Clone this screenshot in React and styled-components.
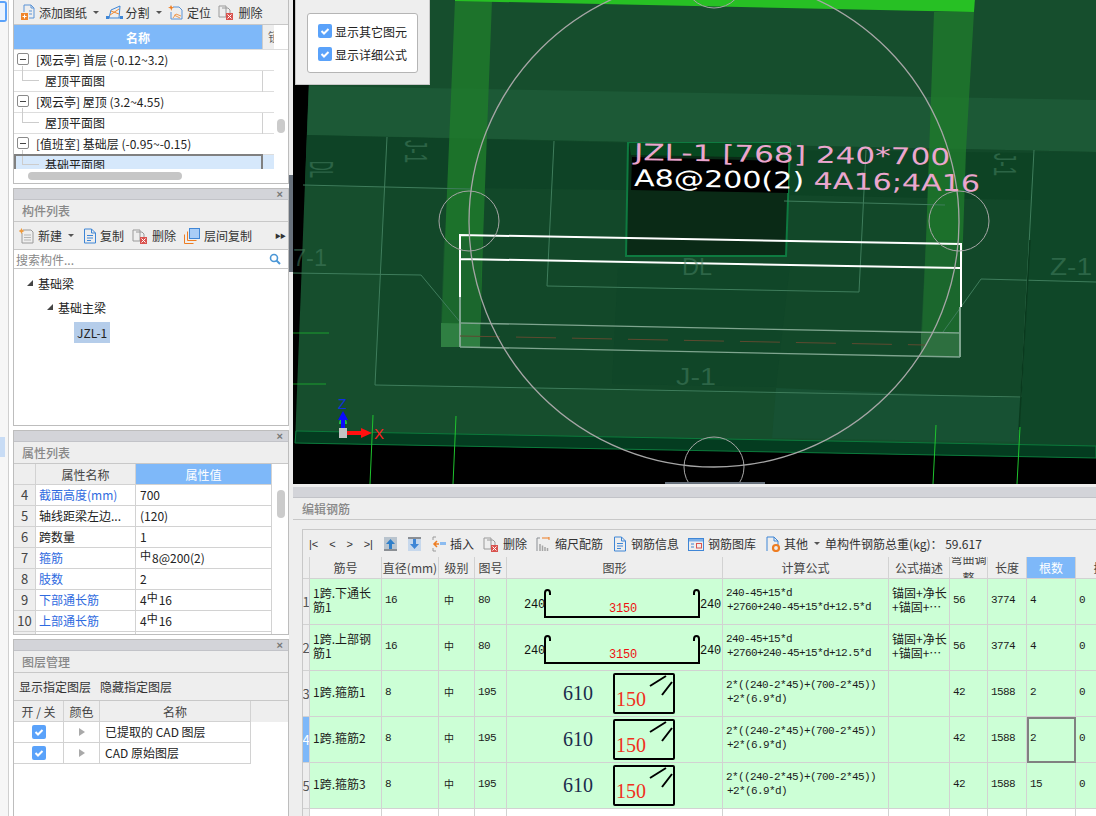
import React from 'react';
import styled, { createGlobalStyle } from 'styled-components';

const BLUE = '#7eb8f9';
const LINE = '#d2d2d2';
const PANEL = '#eeeeee';
const UI_FONT = '"Noto Sans CJK SC", "Noto Sans", sans-serif';
const MONO_FONT = '"Liberation Mono", "Noto Sans CJK SC", monospace';

const GlobalStyle = createGlobalStyle`
  html, body {
    margin: 0;
    width: 1096px;
    height: 816px;
    overflow: hidden;
    background: ${PANEL};
    font-family: ${UI_FONT};
    font-size: 12px;
    color: #222;
  }
  *, *::before, *::after { box-sizing: border-box; }
`;

/* ---------- icons ---------- */

const Svg = ({ children, w = 16, h = 16 }) => (
  <svg width={w} height={h} viewBox={`0 0 ${w} ${h}`} fill="none" style={{ flex: 'none' }}>
    {children}
  </svg>
);

const AddSheetIcon = () => (
  <Svg>
    <path d="M4 1h7l3 3v10H9M4 1v7" stroke="#5b93d6" />
    <path d="M11 1v3h3M9 7h3M9 10h3" stroke="#5b93d6" />
    <rect x="1" y="9" width="7" height="7" fill="#f0852a" />
    <path d="M4.500 10.500v4M2.500 12.500h4" stroke="#fff" />
  </Svg>
);
const SplitIcon = () => (
  <Svg w={17}>
    <path d="M1 14h15M3 14l2-8 9-4-1 12" stroke="#3f86d6" />
    <path d="M4 11l9-6M5 7l8 3" stroke="#ee8a34" />
    <rect x="0" y="12" width="3" height="3" fill="#3f86d6" />
    <rect x="14" y="12" width="3" height="3" fill="#3f86d6" />
  </Svg>
);
const LocateIcon = () => (
  <Svg>
    <path d="M5 3h6l3 3v9H3V8" stroke="#5b93d6" />
    <path d="M3 1l1 2 2 .5-2 1L3.500 7 2.500 4.500 0 3.500 2 3z" fill="#ee7d22" />
    <path d="M5 14l3-4 5 2M6 11l6 3" stroke="#ee9a52" />
  </Svg>
);
const DeleteIcon = () => (
  <Svg>
    <path d="M1 2h7v11H1z" stroke="#9a9a9a" />
    <path d="M4 4h6l2 2v4" stroke="#9a9a9a" />
    <rect x="8" y="9" width="7" height="7" fill="#d9534f" />
    <path d="M9.500 10.500l4 4M13.500 10.500l-4 4" stroke="#fff" />
  </Svg>
);
const NewIcon = () => (
  <Svg>
    <path d="M4 2h8l2 2v11H3V5" stroke="#9a9a9a" />
    <path d="M5 7h7M5 9.500h7M5 12h7" stroke="#b5b5b5" />
    <path d="M2.500 0l1 2 2 1-2 1-1 2-1-2-2-1 2-1z" fill="#ef9a3c" />
  </Svg>
);
const DocIcon = () => (
  <Svg>
    <path d="M2.500 1h7l4 4v10h-11z" stroke="#3f86d6" />
    <path d="M9.500 1v4h4M5 7.500h6M5 10h6M5 12.500h4" stroke="#3f86d6" />
  </Svg>
);
const FloorCopyIcon = () => (
  <Svg>
    <rect x="5.500" y="0.500" width="10" height="10" fill="#a9cdf6" stroke="#3f86d6" />
    <path d="M3.500 3.500v9h9M.5 6.500v9h9" stroke="#ee7d22" />
  </Svg>
);
const ArrowBoxIcon = ({ down }) => (
  <Svg w={13} h={14}>
    <rect width="13" height="14" fill={down ? '#c7d8ec' : '#b9c4ce'} />
    <rect y={down ? 0 : 12} width="13" height="2" fill="#8b8f94" />
    <path
      d={down ? 'M6.500 12L2 7h3V2h3v5h3z' : 'M6.500 2L2 7h3v5h3V7h3z'}
      fill={down ? '#3f86d6' : '#2f7fc9'}
    />
  </Svg>
);
const InsertIcon = () => (
  <Svg w={14}>
    <path d="M1 1h3M1 1v3M1 12v3h3" stroke="#9a9a9a" />
    <path d="M7 8H2M5 5L2 8l3 3" stroke="#ee7d22" strokeWidth="1.500" />
    <rect x="8" y="6" width="6" height="3" fill="#8cbcf0" />
  </Svg>
);
const ScaleIcon = () => (
  <Svg w={14}>
    <path d="M1 2h3M1 2v13" stroke="#8b8f94" />
    <path d="M6 2h7M13 1v3" stroke="#ee7d22" />
    <path d="M4 15V8M6.500 15V9.500M9 15v-4M11.500 15v-3" stroke="#a5a5a5" strokeWidth="1.500" />
  </Svg>
);
const LibraryIcon = () => (
  <Svg>
    <rect x="0.500" y="2.500" width="15" height="12" stroke="#3f86d6" />
    <rect x="1" y="3" width="14" height="2.500" fill="#7eb0e8" />
    <path d="M3 8h3M3 11h3" stroke="#3f86d6" />
    <rect x="8.500" y="7.500" width="5" height="4.500" stroke="#d9534f" />
  </Svg>
);
const OtherIcon = () => (
  <Svg>
    <path d="M2 15V1h7l4 4v4M9 1v4h4" stroke="#3f86d6" />
    <circle cx="11" cy="12" r="3" stroke="#ee7d22" strokeWidth="2.200" />
  </Svg>
);
const SearchIcon = () => (
  <Svg w={12} h={12}>
    <circle cx="5" cy="5" r="3.500" stroke="#4a96d6" strokeWidth="1.600" />
    <path d="M7.500 7.500L11 11" stroke="#4a96d6" strokeWidth="2" />
  </Svg>
);
const CheckMark = () => (
  <svg width="14" height="14" viewBox="0 0 14 14" style={{ flex: 'none' }}>
    <rect width="14" height="14" rx="2" fill="#5aa2fa" />
    <path d="M3.500 7l2.500 2.500L10.500 5" stroke="#fff" strokeWidth="2" fill="none" />
  </svg>
);

/* ---------- page frame ---------- */

const Page = styled.div`
  display: flex;
  width: 1096px;
  height: 816px;
  overflow: hidden;
`;

const Rail = styled.div`
  flex: none;
  width: 9px;
  padding-top: 1px;
  background: #f6f6f6;
  border-right: 1px solid #cfcfcf;
`;

const RailTab = styled.div`
  width: 7px;
  height: 21px;
  border: 2px solid #5aa2fa;
  border-left: none;
  border-radius: 0 3px 3px 0;
  background: #eaf3fe;
`;

const RailMark = styled.div`
  width: 5px;
  height: 20px;
  margin-top: 415px;
  background: #c8dcf5;
`;

const LeftColumn = styled.div`
  flex: none;
  width: 280px;
  padding-left: 4px;
  display: flex;
  flex-direction: column;
  gap: 4px;
  background: #fff;
`;

const Splitter = styled.div`
  flex: none;
  width: 4px;
  background: ${PANEL};
`;

const SplitterGrip = styled.div`
  height: 97px;
  margin-top: 175px;
  background: #68717c;
`;

const RightColumn = styled.div`
  flex: none;
  width: 803px;
  display: flex;
  flex-direction: column;
`;

/* ---------- left panels ---------- */

const Panel = styled.section`
  flex: none;
  position: relative;
  width: 276px;
  height: ${(p) => p.$height}px;
  border: 1px solid #bdbdbd;
  border-top-width: ${(p) => (p.$noTop ? 0 : 1)}px;
  background: #fff;
  overflow: hidden;
`;

const GripBar = styled.div`
  height: 11px;
  display: flex;
  align-items: center;
  justify-content: flex-end;
  padding-right: 5px;
  background: #d3d4d9;
  border-bottom: 1px solid #c2c3c8;
  color: #777;
  font-size: 11px;
  line-height: 1;
  font-family: "Liberation Sans", sans-serif;
  font-weight: bold;
`;

const PanelTitle = styled.div`
  height: 22px;
  padding-left: 8px;
  display: flex;
  align-items: center;
  background: ${PANEL};
  border-bottom: 1px solid #c8c8c8;
  color: #888;
  font-weight: 500;
`;

const Toolbar = styled.div`
  height: ${(p) => p.$height || 28}px;
  display: flex;
  align-items: center;
  padding-left: ${(p) => p.$pad ?? 5}px;
  gap: ${(p) => p.$gap ?? 8}px;
  background: ${PANEL};
  border-bottom: 1px solid #c8c8c8;
  color: #333;
  white-space: nowrap;
`;

const ToolButton = styled.span`
  display: inline-flex;
  align-items: center;
  gap: ${(p) => p.$gap ?? 3}px;
`;

const Caret = styled.span`
  width: 0;
  height: 0;
  margin-left: 3px;
  border-left: 3px solid transparent;
  border-right: 3px solid transparent;
  border-top: 3px solid #555;
`;

const MoreArrows = styled.span`
  margin-left: auto;
  margin-right: 3px;
  font-size: 6px;
  letter-spacing: -1px;
  color: #333;
`;

const SheetHeader = styled.div`
  display: grid;
  grid-template-columns: 248px 12px 1fr;
  height: 25px;
  border-bottom: 1px solid #ddd;
`;

const SheetName = styled.div`
  display: flex;
  align-items: center;
  justify-content: center;
  background: ${BLUE};
  color: #fff;
  font-weight: 700;
`;

const SheetClipped = styled.div`
  overflow: hidden;
  padding-left: 5px;
  line-height: 24px;
  background: ${PANEL};
  border-left: 1px solid #ccc;
  color: #666;
`;

const SheetBody = styled.div`
  position: relative;
  width: 260px;
  height: 119px;
  overflow: hidden;
`;

const SheetRow = styled.div`
  position: relative;
  height: 21px;
  display: flex;
  align-items: center;
  padding-left: ${(p) => (p.$child ? 31 : 3)}px;
  padding-bottom: 2px;
  gap: 7px;
  border-bottom: 1px solid #ddd;
  background: ${(p) => (p.$selected ? '#d6e8fb' : '#fff')};
  white-space: nowrap;
  &::after {
    content: '';
    position: absolute;
    top: ${(p) => (p.$selected ? -1 : 0)}px;
    left: ${(p) => (p.$selected ? 0 : 248)}px;
    width: ${(p) => (p.$selected ? 249 : 1)}px;
    height: ${(p) => (p.$selected ? 23 : 21)}px;
    border: ${(p) => (p.$selected ? '2px solid #808080' : 'none')};
    background: ${(p) => (p.$selected ? 'transparent' : p.$child ? '#d0d0d0' : 'transparent')};
  }
`;

const Connector = styled.span`
  position: absolute;
  left: 8px;
  top: -5px;
  width: 17px;
  height: 15px;
  border-left: 1px solid #ccc;
  border-bottom: 1px solid #ccc;
`;

const Collapse = styled.span`
  flex: none;
  width: 12px;
  height: 12px;
  display: flex;
  align-items: center;
  justify-content: center;
  border: 1px solid #8a8a8a;
  border-radius: 2px;
  &::before {
    content: '';
    width: 6px;
    height: 1px;
    background: #444;
  }
`;

const VerticalThumb = styled.div`
  position: absolute;
  top: ${(p) => p.$top}px;
  left: 263px;
  width: 8px;
  height: ${(p) => p.$height}px;
  border-radius: 4px;
  background: #cbcbcb;
`;

const HorizontalThumb = styled.div`
  position: absolute;
  left: 14px;
  bottom: 3px;
  width: 154px;
  height: 8px;
  border-radius: 4px;
  background: #c6c6c6;
`;

const SearchRow = styled.div`
  height: 19px;
  display: flex;
  align-items: center;
  justify-content: space-between;
  padding: 0 7px 0 2px;
  border-bottom: 1px solid #c8c8c8;
  color: #888;
`;

const Tree = styled.div`
  padding-top: 2px;
`;

const TreeNode = styled.div`
  height: 24px;
  display: flex;
  align-items: center;
  gap: 5px;
  padding-left: ${(p) => p.$indent}px;
  &::before {
    content: ${(p) => (p.$branch ? "''" : 'none')};
    width: 0;
    height: 0;
    border-left: 6px solid transparent;
    border-bottom: 6px solid #444;
  }
`;

const TreeLeaf = styled.span`
  height: 21px;
  padding: 0 3px;
  margin-top: 2px;
  display: flex;
  align-items: center;
  background: #b5cdea;
  font-size: 12px;
`;

const PropGrid = styled.div`
  display: grid;
  grid-template-columns: 22px 100px 136px;
  width: 258px;
`;

const PropIndex = styled.div`
  height: 21px;
  display: flex;
  align-items: center;
  justify-content: center;
  padding-bottom: 1px;
  background: ${PANEL};
  border-right: 1px solid ${LINE};
  border-bottom: 1px solid ${LINE};
  font-size: 13px;
  color: #444;
`;

const PropHead = styled.div`
  height: 21px;
  display: flex;
  align-items: center;
  justify-content: center;
  background: ${(p) => (p.$active ? BLUE : PANEL)};
  color: ${(p) => (p.$active ? '#fff' : '#444')};
  border-right: 1px solid ${LINE};
  border-bottom: 1px solid ${LINE};
`;

const PropCell = styled.div`
  height: 21px;
  display: flex;
  align-items: center;
  padding-left: ${(p) => (p.$name ? 3 : 4)}px;
  padding-bottom: 2px;
  color: ${(p) => (p.$link ? '#2f6be0' : '#222')};
  border-right: 1px solid ${LINE};
  border-bottom: 1px solid ${LINE};
  white-space: nowrap;
`;

const Grade = styled.span`
  font-size: 11px;
  position: relative;
  top: -2px;
  margin-right: 1px;
`;

const LayerGrid = styled.div`
  display: grid;
  grid-template-columns: 50px 36px 151px;
`;

const LayerHead = styled.div`
  height: 21px;
  display: flex;
  align-items: center;
  justify-content: center;
  background: ${PANEL};
  color: #444;
  border-right: 1px solid ${LINE};
  border-bottom: 1px solid ${LINE};
`;

const LayerHeadTail = styled.div`
  position: absolute;
  left: 237px;
  right: 0;
  top: 61px;
  height: 21px;
  background: ${PANEL};
`;

const LayerCell = styled.div`
  height: 21px;
  display: flex;
  align-items: center;
  justify-content: ${(p) => (p.$center ? 'center' : 'flex-start')};
  padding-left: ${(p) => (p.$center ? 0 : 5)}px;
  padding-bottom: ${(p) => (p.$center ? 0 : 2)}px;
  border-right: 1px solid ${LINE};
  border-bottom: 1px solid ${LINE};
`;

const OutlineArrow = styled.span`
  width: 0;
  height: 0;
  border-left: 6px solid #a9a9a9;
  border-top: 4px solid transparent;
  border-bottom: 4px solid transparent;
`;

/* ---------- 3D view ---------- */

const Viewport = styled.div`
  position: relative;
  flex: none;
  height: 484px;
  background: #000;
  overflow: hidden;
`;

const ViewOptions = styled.div`
  position: absolute;
  left: 2px;
  top: 0;
  width: 135px;
  height: 85px;
  padding: 13px 11px 0;
  background: ${PANEL};
  border: 1px solid #c8c8c8;
  border-top: none;
`;

const OptionGroup = styled.div`
  width: 111px;
  height: 60px;
  padding: 10px 0 0 10px;
  display: flex;
  flex-direction: column;
  gap: 9px;
  background: #fff;
  border: 1px solid #b5b5b5;
  border-radius: 3px;
`;

const OptionRow = styled.label`
  display: flex;
  align-items: center;
  gap: 3px;
  height: 14px;
  color: #222;
`;

const SplitterHandle = styled.div`
  position: absolute;
  left: 372px;
  bottom: 0;
  width: 100px;
  height: 2px;
  background: #68717c;
`;

const ModelView = () => (
  <svg width="803" height="484" viewBox="293 0 803 484" style={{ display: 'block' }}>
    {/* slab */}
    <path d="M312 0H1096V458L295 443z" fill="#164e2d" />
    <path d="M309 86L1096 100V152L307 135z" fill="#1c5936" />
    <path d="M387 137L1096 152V400L375 385z" fill="#124829" />
    <path d="M307 135L631 143V190L305 186z" fill="#0e4326" />
    <path d="M776 150L1034 153 1030 200 784 195z" fill="#0d4324" />
    <path d="M776 388L1021 398 1018 442 772 438z" fill="#175133" />
    <path d="M618 268L790 264 776 387 612 384z" fill="#0e4327" opacity="0.5" />
    <path d="M1034 152L1096 153V446L1019 444z" fill="#0f4728" />
    <path d="M296 431L1096 446V458L295 443z" fill="#043c20" stroke="#0c7a3c" />

    {/* columns */}
    <path d="M455 0H492L483 240 480 347H441L445 240z" fill="#1f7a2c" opacity="0.85" />
    <path d="M934 12H974L966 150 959 357H921L926 240z" fill="#1f7a2c" opacity="0.8" />
    <path d="M444 240H482L480 323H441z" fill="#1a612f" opacity="0.6" />
    <path d="M926 240H963L960 333H921z" fill="#1a612f" opacity="0.6" />
    <path d="M455 -2H975L974 12 455 1z" fill="#27c024" />
    <path d="M441 323L480 324V347H441z" fill="#2f7f42" />
    <path d="M921 333L960 334V357L921 356z" fill="#2d6f3f" />

    {/* section window */}
    <path d="M628 143H790L786 256H626z" fill="#0a2a16" stroke="#0e7a40" strokeWidth="2" />
    <path d="M629 143H790L789 158 631 155z" fill="#07481f" />
    <path d="M632 157L788 161V193L631 190z" fill="#000" />

    {/* thin cad lines */}
    <g stroke="#3f7d5c" strokeWidth="1" fill="none">
      <path d="M387 137L375 385 1021 397 1034 150" />
      <path d="M554 141L547 286 859 292 866 150" />
      <path d="M303 185L470 189M784 201L945 205" />
      <path d="M293 273L421 275 460 322" />
      <path d="M1096 282L981 279 943 332" />
    </g>
    <path d="M1030 240L1019 430" stroke="#0a3a1e" strokeWidth="1.500" />

    {/* footing outline */}
    <path d="M460 323L960 333M460 347L960 357" stroke="#7fa58f" strokeWidth="1.300" />
    <path d="M460 297V347M960 307V357" stroke="#7fa58f" strokeWidth="2" />
    <path d="M460 336L925 345" stroke="#5e4a30" strokeDasharray="40 16" strokeWidth="1" />
    <path d="M460 297V235L961 244V307M460 259L960 268" stroke="#fff" strokeWidth="2" fill="none" />

    {/* circles */}
    <g stroke="#a6a6a6" fill="none">
      <circle cx="714" cy="222" r="245" strokeWidth="1.300" />
      <circle cx="469" cy="221" r="30" />
      <circle cx="959" cy="221" r="30" />
      <circle cx="714" cy="467" r="30" />
      <circle cx="714" cy="-22" r="30" />
    </g>

    {/* grid stubs */}
    <g stroke="#1fc32e" strokeWidth="1">
      <path d="M373 415L370 484M456 416L453 484M936 425L933 484M1020 427L1017 484" />
      <path d="M293 333H329M293 384H326" opacity="0.7" />
    </g>

    {/* labels */}
    <g fontFamily='"Liberation Sans", sans-serif' fill="#4a8566" fillOpacity="0.5" fontSize="24">
      <text x="293" y="266" textLength="34" lengthAdjust="spacingAndGlyphs">7-1</text>
      <text x="1050" y="275" textLength="42" lengthAdjust="spacingAndGlyphs">Z-1</text>
      <text x="676" y="385" textLength="40" lengthAdjust="spacingAndGlyphs">J-1</text>
      <text x="682" y="275" textLength="30" lengthAdjust="spacingAndGlyphs">DL</text>
      <text transform="translate(405 140) rotate(90)" fontSize="32" textLength="23" lengthAdjust="spacingAndGlyphs">J-1</text>
      <text transform="translate(994 153) rotate(90)" fontSize="32" textLength="23" lengthAdjust="spacingAndGlyphs">J-1</text>
      <text transform="translate(310 161) rotate(90)" fontSize="34" textLength="17" lengthAdjust="spacingAndGlyphs">DL</text>
    </g>
    <g fontFamily='"DejaVu Sans", sans-serif' fontSize="23">
      <text transform="rotate(0.9 634 160)" x="634" y="160" fill="#eba6ce" textLength="316" lengthAdjust="spacingAndGlyphs">
        JZL-1 [768] 240*700
      </text>
      <text transform="rotate(0.9 634 186)" x="634" y="186" fill="#eba6ce" textLength="346" lengthAdjust="spacingAndGlyphs">
        <tspan fill="#fff">A8@200(2)</tspan> 4A16;4A16
      </text>
    </g>

    {/* axis gizmo */}
    <rect x="339" y="428" width="8" height="10" fill="#c4c4c4" />
    <path d="M339 424c0-3 1-4 1-4h6s1 1 1 4z" fill="#20c040" />
    <path d="M343 411l5 9h-3v8h-4v-8h-3z" fill="#0a0aff" />
    <path d="M347 431h14v-3l11 5-11 5v-3h-14z" fill="#ff1010" />
    <text x="338" y="409" fontFamily='"Liberation Sans", sans-serif' fontSize="14" fill="#1030e0">Z</text>
    <text x="374" y="439" fontFamily='"Liberation Sans", sans-serif' fontSize="15" fill="#ff2020">X</text>
  </svg>
);

/* ---------- rebar editor ---------- */

const Editor = styled.div`
  flex: 1;
  margin-top: 3px;
  background: ${PANEL};
  display: flex;
  flex-direction: column;
  min-height: 0;
`;

const EditorGrip = styled.div`
  flex: none;
  height: 11px;
  background: #d3d4d9;
  border-bottom: 1px solid #c2c3c8;
`;

const EditorTitle = styled.div`
  flex: none;
  height: 22px;
  padding-left: 9px;
  display: flex;
  align-items: center;
  color: #888;
  font-weight: 500;
  border-bottom: 1px solid #c8c8c8;
`;

const RebarBox = styled.div`
  flex: 1;
  margin: 9px 0 0 9px;
  border-top: 1px solid #c8c8c8;
  border-left: 1px solid #c8c8c8;
  overflow: hidden;
`;

const RebarTools = styled.div`
  height: 27px;
  display: flex;
  align-items: center;
  gap: 9px;
  padding-left: 6px;
  color: #333;
  white-space: nowrap;
`;

const PageNav = styled.span`
  display: inline-flex;
  width: 64px;
  margin-right: 2px;
  justify-content: space-between;
  font-family: "Liberation Sans", sans-serif;
  font-size: 11px;
  color: #333;
`;

const ArrowSlot = styled.span`
  display: inline-flex;
  width: 15px;
`;

const Weight = styled.span`
  margin-left: -4px;
`;

const COLUMNS = '7px 72px 57px 36px 32px 216px 166px 61px 38px 39px 49px 60px';

const RebarHeader = styled.div`
  display: grid;
  grid-template-columns: ${COLUMNS};
  height: 22px;
`;

const HeadCell = styled.div`
  display: flex;
  align-items: center;
  justify-content: center;
  overflow: hidden;
  text-align: center;
  line-height: ${(p) => (p.$wrap ? 19 : 15)}px;
  white-space: ${(p) => (p.$wrap ? 'normal' : 'nowrap')};
  background: ${(p) => (p.$active ? BLUE : PANEL)};
  color: ${(p) => (p.$active ? '#fff' : '#444')};
  border-right: 1px solid ${LINE};
  border-bottom: 1px solid ${LINE};
`;

const RebarRow = styled.div`
  display: grid;
  grid-template-columns: ${COLUMNS};
  height: 46px;
  background: ${(p) => (p.$blank ? '#fff' : '#ccffd6')};
`;

const RowIndex = styled.div`
  display: flex;
  align-items: center;
  justify-content: center;
  font-size: 13px;
  overflow: hidden;
  background: ${(p) => (p.$active ? BLUE : PANEL)};
  color: ${(p) => (p.$active ? '#fff' : '#555')};
  border-right: 1px solid ${LINE};
  border-bottom: 1px solid ${LINE};
`;

const Cell = styled.div`
  display: flex;
  align-items: center;
  padding-left: ${(p) => p.$pad ?? 3}px;
  padding-bottom: 3px;
  overflow: hidden;
  color: #1c1c1c;
  line-height: 14px;
  font-family: ${(p) => (p.$mono ? MONO_FONT : UI_FONT)};
  font-size: ${(p) => (p.$mono ? '11px' : '12px')};
  letter-spacing: ${(p) => (p.$mono ? '-0.6px' : '0')};
  border-right: 1px solid ${LINE};
  border-bottom: 1px solid ${LINE};
  outline: ${(p) => (p.$focused ? '2px solid #808080' : 'none')};
  outline-offset: -2px;
`;

const GradeCell = styled(Cell)`
  font-size: 10px;
`;

const ShapeCell = styled.div`
  overflow: hidden;
  border-right: 1px solid ${LINE};
  border-bottom: 1px solid ${LINE};
`;

const Formula = styled.div`
  white-space: pre;
`;

const FormulaTail = styled.div`
  padding-left: 1px;
  white-space: pre;
`;

const LongBarShape = () => (
  <svg width="215" height="45" viewBox="0 0 215 45" style={{ display: 'block' }}>
    <path
      d="M43 16v-2c0-2-1-3-2.500-3S38 12 38 14v24h154V14c0-2-1-3-2.500-3S187 12 187 14v2"
      stroke="#000"
      strokeWidth="2"
      fill="none"
    />
    <g fontFamily={MONO_FONT} fontSize="12">
      <text x="17" y="29" fill="#111" letterSpacing="-0.2">240</text>
      <text x="193" y="29" fill="#111" letterSpacing="-0.2">240</text>
      <text x="102" y="33" fill="#ee1010" letterSpacing="-0.2">3150</text>
    </g>
  </svg>
);

const StirrupShape = () => (
  <svg width="215" height="45" viewBox="0 0 215 45" style={{ display: 'block' }}>
    <rect x="107" y="3" width="60" height="39" rx="1" stroke="#000" strokeWidth="2" fill="none" />
    <path d="M143 15L159 5M155 24L165 11" stroke="#000" strokeWidth="2" />
    <text x="56" y="29" fontFamily='"Liberation Serif", serif' fontSize="20" fill="#1c2c4c">610</text>
    <text x="109" y="35" fontFamily='"Liberation Serif", serif' fontSize="20" fill="#f03020">150</text>
  </svg>
);

const rebars = [
  {
    name: '1跨.下通长筋1', dia: 16, fig: 80, Shape: LongBarShape,
    formula: ['240-45+15*d', '+2760+240-45+15*d+12.5*d'],
    desc: '锚固+净长\n+锚固+…', bend: 56, len: 3774, count: 4,
  },
  {
    name: '1跨.上部钢筋1', dia: 16, fig: 80, Shape: LongBarShape,
    formula: ['240-45+15*d', '+2760+240-45+15*d+12.5*d'],
    desc: '锚固+净长\n+锚固+…', bend: 56, len: 3774, count: 4,
  },
  {
    name: '1跨.箍筋1', dia: 8, fig: 195, Shape: StirrupShape,
    formula: ['2*((240-2*45)+(700-2*45))', '+2*(6.9*d)'], desc: '', bend: 42, len: 1588, count: 2,
  },
  {
    name: '1跨.箍筋2', dia: 8, fig: 195, Shape: StirrupShape,
    formula: ['2*((240-2*45)+(700-2*45))', '+2*(6.9*d)'], desc: '', bend: 42, len: 1588, count: 2, focused: true,
  },
  {
    name: '1跨.箍筋3', dia: 8, fig: 195, Shape: StirrupShape,
    formula: ['2*((240-2*45)+(700-2*45))', '+2*(6.9*d)'], desc: '', bend: 42, len: 1588, count: 15,
  },
];

const rebarHeads = ['', '筋号', '直径(mm)', '级别', '图号', '图形', '计算公式', '公式描述', '弯曲调整', '长度', '根数', '搭接'];

const props = [
  [4, '截面高度(mm)', '700', true],
  [5, '轴线距梁左边...', '(120)', false],
  [6, '跨数量', '1', false],
  [7, '箍筋', <><Grade>中</Grade>8@200(2)</>, true],
  [8, '肢数', '2', true],
  [9, '下部通长筋', <>4<Grade>中</Grade>16</>, true],
  [10, '上部通长筋', <>4<Grade>中</Grade>16</>, true],
];

const sheets = [
  ['[观云亭] 首层 (-0.12~3.2)', '屋顶平面图'],
  ['[观云亭] 屋顶 (3.2~4.55)', '屋顶平面图'],
  ['[值班室] 基础层 (-0.95~-0.15)', '基础平面图'],
];

const App = () => (
  <>
    <GlobalStyle />
    <Page>
      <Rail>
        <RailTab />
        <RailMark />
      </Rail>

      <LeftColumn>
        <Panel $height={184} $noTop>
          <Toolbar $height={25} $gap={6.5} $pad={6}>
            <ToolButton><AddSheetIcon />添加图纸<Caret /></ToolButton>
            <ToolButton><SplitIcon />分割<Caret /></ToolButton>
            <ToolButton><LocateIcon />定位</ToolButton>
            <ToolButton $gap={5}><DeleteIcon />删除</ToolButton>
          </Toolbar>
          <SheetHeader>
            <SheetName>名称</SheetName>
            <SheetClipped>锁定</SheetClipped>
          </SheetHeader>
          <SheetBody>
            {sheets.map(([floor, drawing], i) => (
              <React.Fragment key={floor}>
                <SheetRow><Collapse />{floor}</SheetRow>
                <SheetRow $child $selected={i === 2}><Connector />{drawing}</SheetRow>
              </React.Fragment>
            ))}
          </SheetBody>
          <VerticalThumb $top={119} $height={14} />
          <HorizontalThumb />
        </Panel>

        <Panel $height={238}>
          <GripBar>×</GripBar>
          <PanelTitle>构件列表</PanelTitle>
          <Toolbar>
            <ToolButton><NewIcon />新建<Caret /></ToolButton>
            <ToolButton $gap={2}><DocIcon />复制</ToolButton>
            <ToolButton $gap={4}><DeleteIcon />删除</ToolButton>
            <ToolButton $gap={4}><FloorCopyIcon />层间复制</ToolButton>
            <MoreArrows>▶▶</MoreArrows>
          </Toolbar>
          <SearchRow>搜索构件...<SearchIcon /></SearchRow>
          <Tree>
            <TreeNode $indent={13} $branch>基础梁</TreeNode>
            <TreeNode $indent={33} $branch>基础主梁</TreeNode>
            <TreeNode $indent={60}><TreeLeaf>JZL-1</TreeLeaf></TreeNode>
          </Tree>
        </Panel>

        <Panel $height={205}>
          <GripBar>×</GripBar>
          <PanelTitle>属性列表</PanelTitle>
          <PropGrid>
            <PropHead />
            <PropHead>属性名称</PropHead>
            <PropHead $active>属性值</PropHead>
            {props.map(([no, name, value, link]) => (
              <React.Fragment key={no}>
                <PropIndex>{no}</PropIndex>
                <PropCell $name $link={link}>{name}</PropCell>
                <PropCell>{value}</PropCell>
              </React.Fragment>
            ))}
            <PropIndex />
            <PropCell />
            <PropCell />
          </PropGrid>
          <VerticalThumb $top={59} $height={28} />
        </Panel>

        <Panel $height={200}>
          <GripBar>×</GripBar>
          <PanelTitle>图层管理</PanelTitle>
          <Toolbar $pad={5} $gap={9}>
            <span>显示指定图层</span>
            <span>隐藏指定图层</span>
          </Toolbar>
          <LayerHeadTail />
          <LayerGrid>
            <LayerHead>开 / 关</LayerHead>
            <LayerHead>颜色</LayerHead>
            <LayerHead>名称</LayerHead>
            {['已提取的 CAD 图层', 'CAD 原始图层'].map((layer) => (
              <React.Fragment key={layer}>
                <LayerCell $center><CheckMark /></LayerCell>
                <LayerCell $center><OutlineArrow /></LayerCell>
                <LayerCell>{layer}</LayerCell>
              </React.Fragment>
            ))}
          </LayerGrid>
        </Panel>
      </LeftColumn>

      <Splitter><SplitterGrip /></Splitter>

      <RightColumn>
        <Viewport>
          <ModelView />
          <ViewOptions>
            <OptionGroup>
              <OptionRow><CheckMark />显示其它图元</OptionRow>
              <OptionRow><CheckMark />显示详细公式</OptionRow>
            </OptionGroup>
          </ViewOptions>
          <SplitterHandle />
        </Viewport>

        <Editor>
          <EditorGrip />
          <EditorTitle>编辑钢筋</EditorTitle>
          <RebarBox>
            <RebarTools>
              <PageNav><span>|&lt;</span><span>&lt;</span><span>&gt;</span><span>&gt;|</span></PageNav>
              <ArrowSlot><ArrowBoxIcon /></ArrowSlot>
              <ArrowSlot><ArrowBoxIcon down /></ArrowSlot>
              <ToolButton $gap={4}><InsertIcon />插入</ToolButton>
              <ToolButton $gap={4}><DeleteIcon />删除</ToolButton>
              <ToolButton $gap={5}><ScaleIcon />缩尺配筋</ToolButton>
              <ToolButton $gap={3}><DocIcon />钢筋信息</ToolButton>
              <ToolButton $gap={4}><LibraryIcon />钢筋图库</ToolButton>
              <ToolButton $gap={3}><OtherIcon />其他<Caret /></ToolButton>
              <Weight>单构件钢筋总重(kg)： 59.617</Weight>
            </RebarTools>
            <RebarHeader>
              {rebarHeads.map((head, i) => (
                <HeadCell key={i} $active={head === '根数'} $wrap={head === '弯曲调整'}>{head}</HeadCell>
              ))}
            </RebarHeader>
            {rebars.map((bar, i) => (
              <RebarRow key={bar.name}>
                <RowIndex $active={bar.focused}>{i + 1}</RowIndex>
                <Cell>{bar.name}</Cell>
                <Cell $mono>{bar.dia}</Cell>
                <GradeCell $pad={5}>中</GradeCell>
                <Cell $mono>{bar.fig}</Cell>
                <ShapeCell><bar.Shape /></ShapeCell>
                <Cell $mono>
                  <div>
                    <Formula>{bar.formula[0]}</Formula>
                    <FormulaTail>{bar.formula[1]}</FormulaTail>
                  </div>
                </Cell>
                <Cell><Formula>{bar.desc}</Formula></Cell>
                <Cell $mono>{bar.bend}</Cell>
                <Cell $mono>{bar.len}</Cell>
                <Cell $mono $focused={bar.focused}>{bar.count}</Cell>
                <Cell $mono>0</Cell>
              </RebarRow>
            ))}
            <RebarRow $blank>
              {rebarHeads.map((head, i) => (i === 0 ? <RowIndex key={i} /> : <Cell key={i} />))}
            </RebarRow>
          </RebarBox>
        </Editor>
      </RightColumn>
    </Page>
  </>
);

export default App;
